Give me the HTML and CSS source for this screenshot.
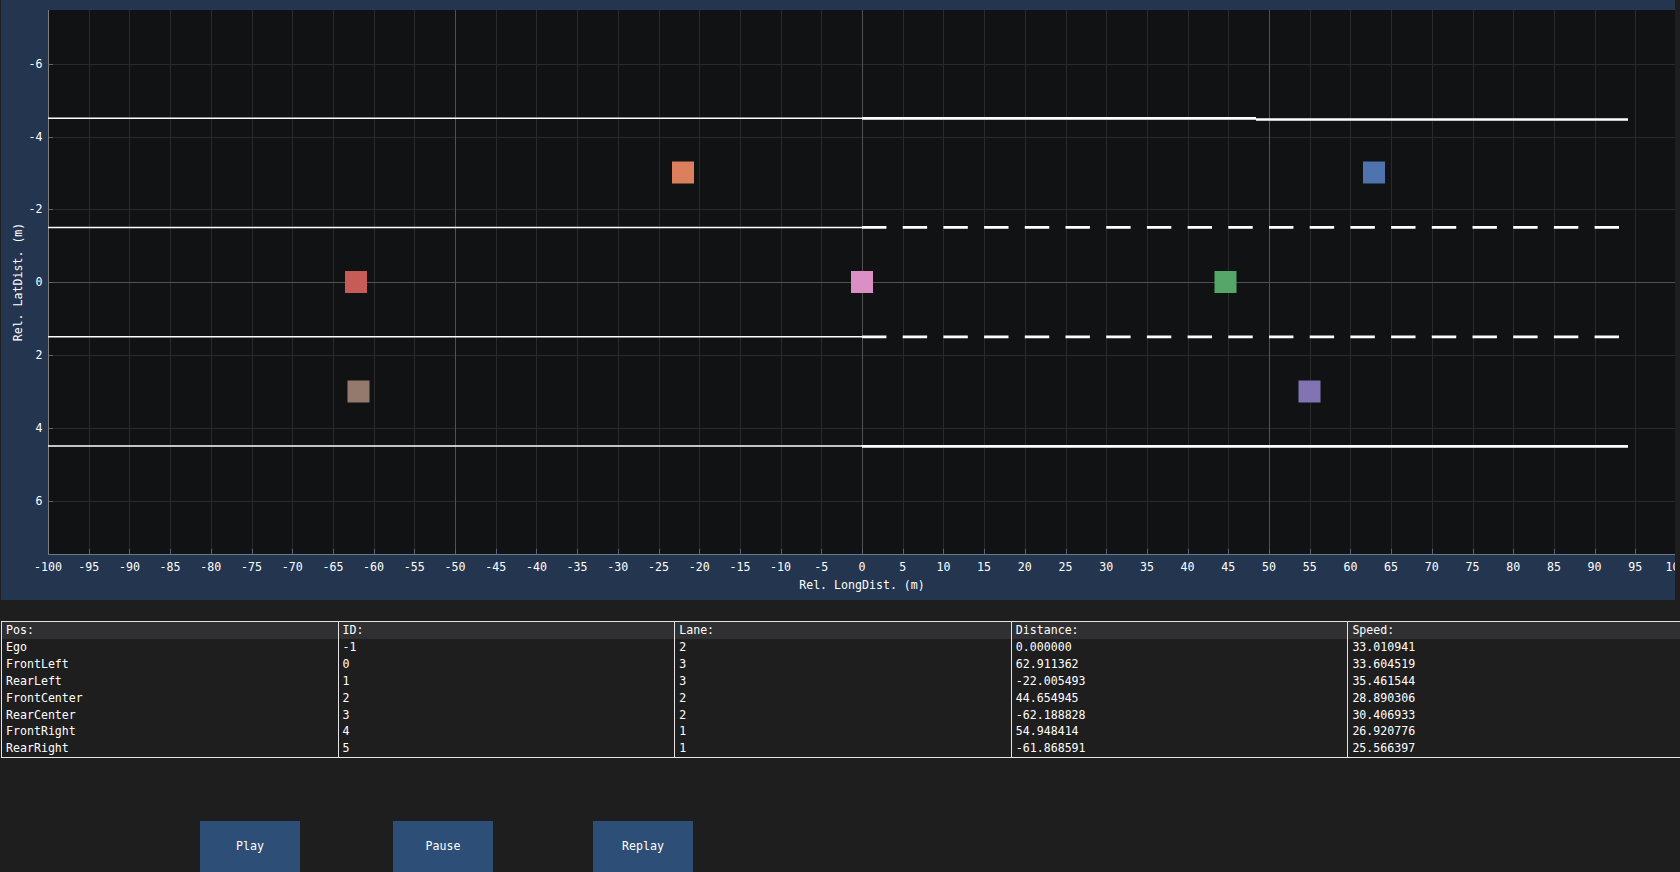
FILE: index.html
```html
<!DOCTYPE html>
<html>
<head>
<meta charset="utf-8">
<link rel="stylesheet" href="styles.css">
</head>
<body>
<div class="plot-frame">
<svg class="plot" width="1674" height="600" viewBox="1 0 1674 600" xmlns="http://www.w3.org/2000/svg">
  <rect class="plot-bg" x="48" y="10" width="1628" height="544"/>
  <path class="grid-minor" d="M89.5 10V554M129.5 10V554M170.5 10V554M211.5 10V554M252.5 10V554M292.5 10V554M333.5 10V554M374.5 10V554M414.5 10V554M496.5 10V554M536.5 10V554M577.5 10V554M618.5 10V554M659.5 10V554M699.5 10V554M740.5 10V554M781.5 10V554M821.5 10V554M903.5 10V554M943.5 10V554M984.5 10V554M1025.5 10V554M1066.5 10V554M1106.5 10V554M1147.5 10V554M1188.5 10V554M1228.5 10V554M1310.5 10V554M1350.5 10V554M1391.5 10V554M1432.5 10V554M1473.5 10V554M1513.5 10V554M1554.5 10V554M1595.5 10V554M1635.5 10V554M48 64.5H1676M48 137.5H1676M48 209.5H1676M48 355.5H1676M48 428.5H1676M48 501.5H1676"/>
  <path class="grid-major" d="M455.5 10V554M862.5 10V554M1269.5 10V554M48 282.5H1676"/>
  <path class="ticks" d="M89.5 549V554M129.5 549V554M170.5 549V554M211.5 549V554M252.5 549V554M292.5 549V554M333.5 549V554M374.5 549V554M414.5 549V554M455.5 549V554M496.5 549V554M536.5 549V554M577.5 549V554M618.5 549V554M659.5 549V554M699.5 549V554M740.5 549V554M781.5 549V554M821.5 549V554M862.5 549V554M903.5 549V554M943.5 549V554M984.5 549V554M1025.5 549V554M1066.5 549V554M1106.5 549V554M1147.5 549V554M1188.5 549V554M1228.5 549V554M1269.5 549V554M1310.5 549V554M1350.5 549V554M1391.5 549V554M1432.5 549V554M1473.5 549V554M1513.5 549V554M1554.5 549V554M1595.5 549V554M1635.5 549V554M48 64.5H53M48 137.5H53M48 209.5H53M48 282.5H53M48 355.5H53M48 428.5H53M48 501.5H53"/>
  <path class="axis-left" d="M48.5 10V554"/>
  <path class="axis-bottom" d="M48 554.5H1676"/>

  <!-- lane lines, left half (thin) -->
  <path class="lane-thin" d="M48 118.25H862M48 227.5H862M48 336.75H862M48 446H862"/>
  <!-- lane lines, right half (thick) -->
  <path class="lane-thick" d="M862 118.35H1256M1256 119.5H1628M862 446.35H1628"/>
  <path class="lane-dash" d="M862 227.35H1619M862 336.85H1619"/>

  <!-- vehicles -->
  <rect class="veh" fill="#DB8FC4" x="851" y="271" width="22" height="22"/>
  <rect class="veh" fill="#4E73AF" x="1363" y="161.5" width="22" height="22"/>
  <rect class="veh" fill="#DC7F5C" x="672" y="161.5" width="22" height="22"/>
  <rect class="veh" fill="#56A66A" x="1214.5" y="271" width="22" height="22"/>
  <rect class="veh" fill="#C75B58" x="345" y="271" width="22" height="22"/>
  <rect class="veh" fill="#8274B2" x="1298.5" y="380.5" width="22" height="22"/>
  <rect class="veh" fill="#937A6C" x="347.5" y="380.5" width="22" height="22"/>

  <!-- y tick labels -->
  <g class="ylabels">
    <text x="42.5" y="68">-6</text>
    <text x="42.5" y="141">-4</text>
    <text x="42.5" y="213">-2</text>
    <text x="42.5" y="286">0</text>
    <text x="42.5" y="359">2</text>
    <text x="42.5" y="432">4</text>
    <text x="42.5" y="505">6</text>
  </g>
  <!-- x tick labels -->
  <g class="xlabels">
    <text x="48" y="570.5">-100</text>
    <text x="88.7" y="570.5">-95</text>
    <text x="129.4" y="570.5">-90</text>
    <text x="170.1" y="570.5">-85</text>
    <text x="210.8" y="570.5">-80</text>
    <text x="251.5" y="570.5">-75</text>
    <text x="292.2" y="570.5">-70</text>
    <text x="332.9" y="570.5">-65</text>
    <text x="373.6" y="570.5">-60</text>
    <text x="414.3" y="570.5">-55</text>
    <text x="455" y="570.5">-50</text>
    <text x="495.7" y="570.5">-45</text>
    <text x="536.4" y="570.5">-40</text>
    <text x="577.1" y="570.5">-35</text>
    <text x="617.8" y="570.5">-30</text>
    <text x="658.5" y="570.5">-25</text>
    <text x="699.2" y="570.5">-20</text>
    <text x="739.9" y="570.5">-15</text>
    <text x="780.6" y="570.5">-10</text>
    <text x="821.3" y="570.5">-5</text>
    <text x="862" y="570.5">0</text>
    <text x="902.7" y="570.5">5</text>
    <text x="943.4" y="570.5">10</text>
    <text x="984.1" y="570.5">15</text>
    <text x="1024.8" y="570.5">20</text>
    <text x="1065.5" y="570.5">25</text>
    <text x="1106.2" y="570.5">30</text>
    <text x="1146.9" y="570.5">35</text>
    <text x="1187.6" y="570.5">40</text>
    <text x="1228.3" y="570.5">45</text>
    <text x="1269" y="570.5">50</text>
    <text x="1309.7" y="570.5">55</text>
    <text x="1350.4" y="570.5">60</text>
    <text x="1391.1" y="570.5">65</text>
    <text x="1431.8" y="570.5">70</text>
    <text x="1472.5" y="570.5">75</text>
    <text x="1513.2" y="570.5">80</text>
    <text x="1553.9" y="570.5">85</text>
    <text x="1594.6" y="570.5">90</text>
    <text x="1635.3" y="570.5">95</text>
    <text x="1676" y="570.5">100</text>
  </g>
  <text class="axis-title" x="862" y="589">Rel. LongDist. (m)</text>
  <text class="axis-title" transform="translate(22 282) rotate(-90)">Rel. LatDist. (m)</text>
</svg>
</div>

<div class="table-wrap">
<table class="info">
  <colgroup><col><col><col><col><col></colgroup>
  <thead>
    <tr><th>Pos:</th><th>ID:</th><th>Lane:</th><th>Distance:</th><th>Speed:</th></tr>
  </thead>
  <tbody>
    <tr><td>Ego</td><td>-1</td><td>2</td><td>0.000000</td><td>33.010941</td></tr>
    <tr><td>FrontLeft</td><td>0</td><td>3</td><td>62.911362</td><td>33.604519</td></tr>
    <tr><td>RearLeft</td><td>1</td><td>3</td><td>-22.005493</td><td>35.461544</td></tr>
    <tr><td>FrontCenter</td><td>2</td><td>2</td><td>44.654945</td><td>28.890306</td></tr>
    <tr><td>RearCenter</td><td>3</td><td>2</td><td>-62.188828</td><td>30.406933</td></tr>
    <tr><td>FrontRight</td><td>4</td><td>1</td><td>54.948414</td><td>26.920776</td></tr>
    <tr><td>RearRight</td><td>5</td><td>1</td><td>-61.868591</td><td>25.566397</td></tr>
  </tbody>
</table>
</div>

<div class="controls">
  <button class="btn btn-play">Play</button>
  <button class="btn btn-pause">Pause</button>
  <button class="btn btn-replay">Replay</button>
</div>
</body>
</html>
```

FILE: styles.css
```css
html, body {
  margin: 0;
  padding: 0;
}
body {
  width: 1680px;
  height: 872px;
  overflow: hidden;
  background: #1e1e1e;
  color: #ffffff;
  font-family: "DejaVu Sans Mono", "Liberation Mono", monospace;
  font-size: 11.6px;
}

/* ---------- plot ---------- */
.plot-frame {
  margin-left: 1px;
  width: 1674px;
  height: 600px;
  background: #243550;
  overflow: hidden;
}
.plot {
  display: block;
}
.plot-bg {
  fill: #111214;
}
.grid-minor {
  stroke: #292a2d;
  stroke-width: 1;
  fill: none;
}
.grid-major {
  stroke: #505153;
  stroke-width: 1;
  fill: none;
}
.ticks {
  stroke: #5d6270;
  stroke-width: 1;
  fill: none;
}
.axis-left {
  stroke: #7d7d80;
  stroke-width: 1;
}
.axis-bottom {
  stroke: #6c778a;
  stroke-width: 1;
}
.lane-thin {
  stroke: #ffffff;
  stroke-width: 1.4;
  fill: none;
}
.lane-thick {
  stroke: #ffffff;
  stroke-width: 2.7;
  fill: none;
}
.lane-dash {
  stroke: #ffffff;
  stroke-width: 2.7;
  stroke-dasharray: 24.42 16.28;
  fill: none;
}
.ylabels text,
.xlabels text,
.axis-title {
  fill: #ffffff;
  font-family: "DejaVu Sans Mono", "Liberation Mono", monospace;
  font-size: 11.6px;
}
.ylabels text {
  text-anchor: end;
}
.xlabels text,
.axis-title {
  text-anchor: middle;
}

/* ---------- table ---------- */
.table-wrap {
  margin-top: 21px;
  margin-left: 1px;
  width: 1679px;
  overflow: hidden;
}
.info {
  border-collapse: collapse;
  table-layout: fixed;
  width: 1683px;
  border-top: 1px solid #e4e4e4;
  border-bottom: 1px solid #e4e4e4;
  border-left: 1px solid #e4e4e4;
}
.info col {
  width: 336.6px;
}
.info th,
.info td {
  height: 16.9px;
  line-height: 16.9px;
  padding: 0 0 0 4px;
  text-align: left;
  font-weight: normal;
  white-space: nowrap;
  border-right: 1px solid #e4e4e4;
  box-sizing: border-box;
}
.info thead th {
  background: #303033;
}

/* ---------- buttons ---------- */
.controls {
  display: flex;
  margin-top: 63px;
  padding-left: 200px;
}
.btn {
  flex: none;
  width: 100px;
  height: 54px;
  border: none;
  border-radius: 0;
  background: #2d4e76;
  color: #ffffff;
  font-family: "DejaVu Sans Mono", "Liberation Mono", monospace;
  font-size: 11.6px;
  padding: 0 0 4px 0;
}
.btn-pause {
  margin-left: 93px;
}
.btn-replay {
  margin-left: 100px;
}
```
